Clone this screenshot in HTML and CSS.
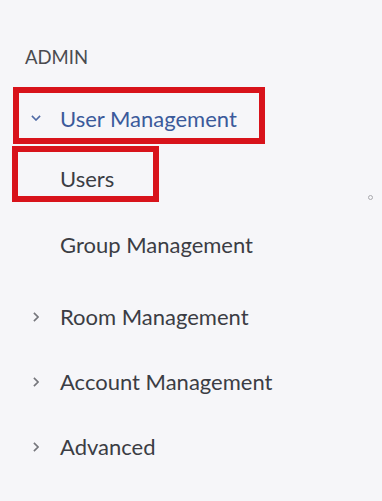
FILE: index.html
```html
<!DOCTYPE html>
<html lang="en">
<head>
  <meta charset="UTF-8" />
  <title>Admin menu</title>
  <link rel="stylesheet" href="styles.css">
</head>
<body>
  <nav class="sidebar">
    <div class="section-title">ADMIN</div>

    <div class="nav-item open marked marked-main">
      <svg class="chevron down" width="10" height="6" viewBox="0 0 10 6"><path d="M0.9 0.9 L5 5 L9.1 0.9" fill="none" stroke="currentColor" stroke-width="1.6"/></svg>
      <span class="label">User Management</span>
    </div>

    <div class="sub-menu">
      <div class="sub-item marked marked-sub">
        <span class="label">Users</span>
      </div>
      <div class="sub-item">
        <span class="label">Group Management</span>
      </div>
    </div>

    <div class="nav-item">
      <svg class="chevron right" width="6" height="10" viewBox="0 0 6 10"><path d="M0.9 0.9 L5 5 L0.9 9.1" fill="none" stroke="currentColor" stroke-width="1.6"/></svg>
      <span class="label">Room Management</span>
    </div>
    <div class="nav-item">
      <svg class="chevron right" width="6" height="10" viewBox="0 0 6 10"><path d="M0.9 0.9 L5 5 L0.9 9.1" fill="none" stroke="currentColor" stroke-width="1.6"/></svg>
      <span class="label">Account Management</span>
    </div>
    <div class="nav-item">
      <svg class="chevron right" width="6" height="10" viewBox="0 0 6 10"><path d="M0.9 0.9 L5 5 L0.9 9.1" fill="none" stroke="currentColor" stroke-width="1.6"/></svg>
      <span class="label">Advanced</span>
    </div>
  </nav>

  <span class="cursor-dot"></span>
</body>
</html>
```

FILE: styles.css
```css
body {
  margin: 0;
  min-height: 501px;
  background-color: #f6f6f9;
  font-family: 'Lato', 'Inter', sans-serif;
  color: #3b3d44;
  position: relative;
}

.sidebar {
  padding-top: 46px;
}

.section-title {
  margin-left: 25px;
  font-size: 18.5px;
  line-height: 22px;
  color: #4a4b50;
}

/* top level rows */
.nav-item {
  display: flex;
  align-items: center;
  height: 65px;
  padding-left: 33px;
  font-size: 22px;
  box-sizing: border-box;
}

.nav-item .chevron {
  color: #75767c;
  margin-right: 21px;
  flex-shrink: 0;
}

.nav-item.open {
  color: #3b5a9b;
}

.nav-item.open .chevron {
  color: #4f6aa5;
  margin-right: 19px;
}

.sub-menu {
  margin-bottom: 7px;
}

.sub-item {
  display: flex;
  align-items: center;
  height: 65px;
  padding-left: 60px;
  font-size: 22px;
  box-sizing: border-box;
  margin-top: 10px;
}

/* red annotation boxes */
.marked {
  border: 6px solid #d8131b;
}

.marked-main {
  margin-top: 19px;
  margin-left: 13px;
  width: 252px;
  height: 57px;
  padding-left: 12px;
  padding-top: 5px;
}

.marked-sub {
  margin-top: 2px;
  margin-left: 12px;
  width: 147px;
  height: 56px;
  padding-left: 42px;
  padding-top: 8px;
}

.cursor-dot {
  position: absolute;
  left: 368px;
  top: 195px;
  width: 3px;
  height: 3px;
  border: 1px solid #a9a9ae;
  border-radius: 50%;
}
```
